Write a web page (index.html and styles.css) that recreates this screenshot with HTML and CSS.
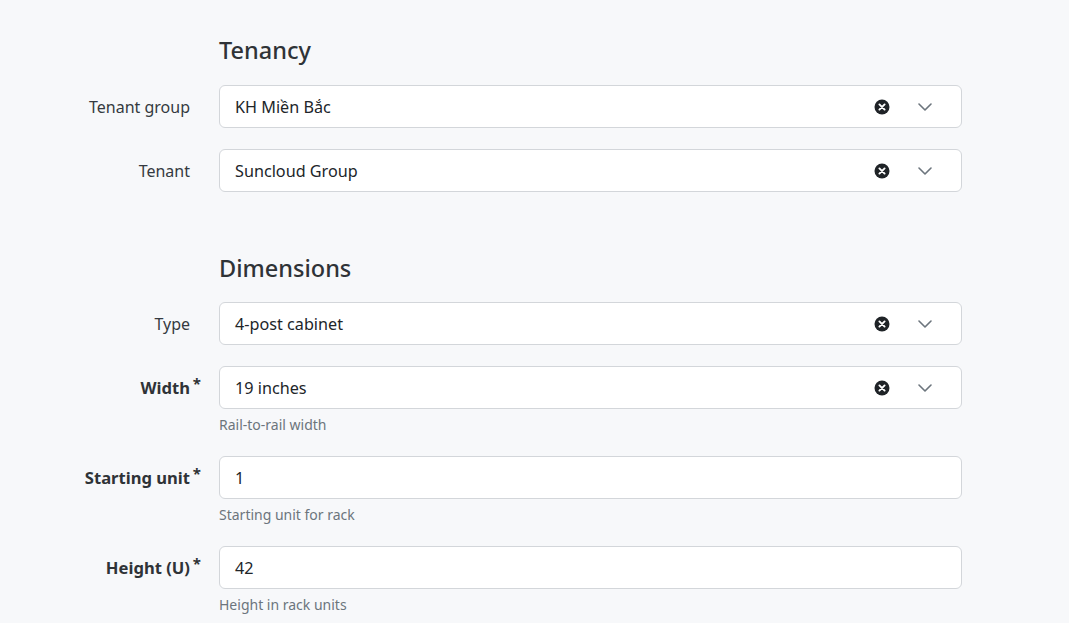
FILE: index.html
```html
<!DOCTYPE html>
<html lang="vi">
<head>
<meta charset="utf-8">
<title>Rack form</title>
<link rel="stylesheet" href="styles.css">
</head>
<body>
<main class="form">
  <section class="group">
    <div class="row head-row"><div class="label"></div><h2 class="heading">Tenancy</h2></div>
    <div class="row">
      <label class="label">Tenant group</label>
      <div class="field">
        <div class="control select"><span class="value">KH Miền Bắc</span>
          <span class="icons"><svg class="clear" viewBox="0 0 16 16"><circle cx="8" cy="8" r="7.5" fill="#1f2327"/><path d="M5.4 5.4l5.2 5.2M10.6 5.4l-5.2 5.2" stroke="#fff" stroke-width="1.9" stroke-linecap="round"/></svg><svg class="chev" viewBox="0 0 14 8"><path d="M1 1l6 6 6-6" fill="none" stroke="#6c757d" stroke-width="1.6" stroke-linecap="round" stroke-linejoin="round"/></svg></span>
        </div>
      </div>
    </div>
    <div class="row">
      <label class="label">Tenant</label>
      <div class="field">
        <div class="control select"><span class="value">Suncloud Group</span>
          <span class="icons"><svg class="clear" viewBox="0 0 16 16"><circle cx="8" cy="8" r="7.5" fill="#1f2327"/><path d="M5.4 5.4l5.2 5.2M10.6 5.4l-5.2 5.2" stroke="#fff" stroke-width="1.9" stroke-linecap="round"/></svg><svg class="chev" viewBox="0 0 14 8"><path d="M1 1l6 6 6-6" fill="none" stroke="#6c757d" stroke-width="1.6" stroke-linecap="round" stroke-linejoin="round"/></svg></span>
        </div>
      </div>
    </div>
  </section>

  <section class="group">
    <div class="row head-row"><div class="label"></div><h2 class="heading">Dimensions</h2></div>
    <div class="row">
      <label class="label">Type</label>
      <div class="field">
        <div class="control select"><span class="value">4-post cabinet</span>
          <span class="icons"><svg class="clear" viewBox="0 0 16 16"><circle cx="8" cy="8" r="7.5" fill="#1f2327"/><path d="M5.4 5.4l5.2 5.2M10.6 5.4l-5.2 5.2" stroke="#fff" stroke-width="1.9" stroke-linecap="round"/></svg><svg class="chev" viewBox="0 0 14 8"><path d="M1 1l6 6 6-6" fill="none" stroke="#6c757d" stroke-width="1.6" stroke-linecap="round" stroke-linejoin="round"/></svg></span>
        </div>
      </div>
    </div>
    <div class="row">
      <label class="label required">Width</label>
      <div class="field">
        <div class="control select"><span class="value">19 inches</span>
          <span class="icons"><svg class="clear" viewBox="0 0 16 16"><circle cx="8" cy="8" r="7.5" fill="#1f2327"/><path d="M5.4 5.4l5.2 5.2M10.6 5.4l-5.2 5.2" stroke="#fff" stroke-width="1.9" stroke-linecap="round"/></svg><svg class="chev" viewBox="0 0 14 8"><path d="M1 1l6 6 6-6" fill="none" stroke="#6c757d" stroke-width="1.6" stroke-linecap="round" stroke-linejoin="round"/></svg></span>
        </div>
        <div class="help">Rail-to-rail width</div>
      </div>
    </div>
    <div class="row">
      <label class="label required">Starting unit</label>
      <div class="field">
        <div class="control"><span class="value">1</span></div>
        <div class="help">Starting unit for rack</div>
      </div>
    </div>
    <div class="row">
      <label class="label required">Height (U)</label>
      <div class="field">
        <div class="control"><span class="value">42</span></div>
        <div class="help">Height in rack units</div>
      </div>
    </div>
  </section>
</main>
</body>
</html>
```

FILE: styles.css
```css
* { box-sizing: border-box; }
html, body { margin: 0; padding: 0; }
body {
  background: #f7f8fa;
  font-family: "Noto Sans", "Open Sans", sans-serif;
  color: #212529;
  width: 1069px;
  height: 623px;
  overflow: hidden;
}
.form {
  padding-top: 36px;
  display: flex;
  flex-direction: column;
  gap: 40px;
}
.group { display: flex; flex-direction: column; }
.row {
  display: grid;
  grid-template-columns: 190px 743px;
  column-gap: 29px;
  align-items: start;
  margin-bottom: 21px;
}
.head-row { margin-bottom: 20px; }
.heading {
  margin: 0;
  font-size: 23.5px;
  line-height: 29px;
  font-weight: 500;
  color: #2f3337;
}
.group + .group .heading { padding-top: 1px; line-height: 28px; }
.label {
  position: relative;
  height: 43px;
  display: flex;
  align-items: center;
  justify-content: flex-end;
  font-size: 16px;
  color: #343a40;
}
.head-row .label { height: auto; }
.label.required { font-weight: 700; color: #2f3337; font-size: 16.6px; }
.label.required::after {
  content: "*";
  position: absolute;
  right: -11px;
  top: 7px;
  font-size: 15px;
  font-weight: 700;
}
.control {
  height: 43px;
  background: #fff;
  border: 1px solid #d3d6da;
  border-radius: 6px;
  display: flex;
  align-items: center;
  padding: 0 16px 0 15px;
  font-size: 16.2px;
  color: #212529;
}
.value { flex: 1; }
.icons { display: flex; align-items: center; }
.clear { width: 16px; height: 16px; }
.chev { width: 14px; height: 8px; margin-left: 28px; margin-right: 13px; }
.help {
  margin-top: 5px;
  font-size: 14px;
  line-height: 21px;
  color: #6c757d;
}
```
